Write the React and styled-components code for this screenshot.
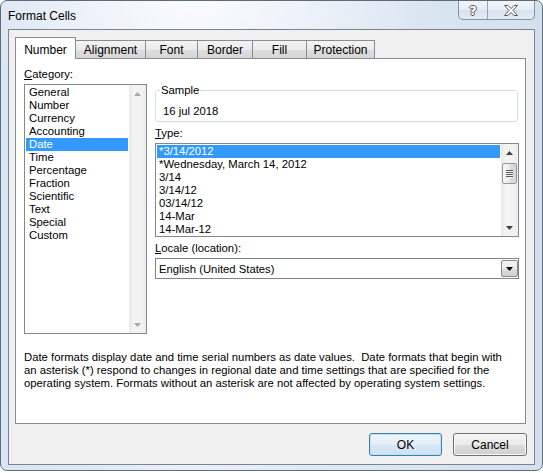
import React from "react";
import styled, { createGlobalStyle } from "styled-components";

const FONT = `"Liberation Sans", Arial, sans-serif`;

const GlobalStyle = createGlobalStyle`
  html, body { margin: 0; padding: 0; background: #ffffff; }
  body { font-family: ${FONT}; font-size: 11.3px; color: #000; }
  * { box-sizing: border-box; }
`;

const Window = styled.div`
  width: 543px;
  height: 471px;
  border: 1px solid #5d6b7a;
  border-radius: 7px;
  background:
    radial-gradient(ellipse 55% 30% at 35% 0%, rgba(255,255,255,0.75), rgba(255,255,255,0) 80%),
    linear-gradient(90deg, #d9e5f2 0%, #e9f0f8 35%, #dde7f3 70%, #d3e0ee 100%);
  display: flex;
  flex-direction: column;
  overflow: hidden;
`;

const TitleBar = styled.div`
  height: 28px;
  display: flex;
  align-items: flex-start;
  padding: 0 7px 0 7px;
`;

const Title = styled.div`
  margin-top: 8px;
  font-size: 12px;
  line-height: 14px;
`;

const CaptionGroup = styled.div`
  margin-left: auto;
  display: flex;
  height: 19px;
  border: 1px solid #8593a4;
  border-top: none;
  border-radius: 0 0 5px 5px;
  background: linear-gradient(#f2f6fb, #e4ecf5 50%, #d8e2ee 51%, #e2eaf4);
  overflow: hidden;
`;

const CaptionButton = styled.div`
  width: ${(p) => p.$w}px;
  display: flex;
  align-items: center;
  justify-content: center;
  & + & { border-left: 1px solid #95a2b2; }
`;

const HelpGlyph = styled.span`
  font-family: "DejaVu Sans", sans-serif;
  font-weight: bold;
  font-size: 13px;
  line-height: 13px;
  color: #ffffff;
  text-shadow: 1px 0 0 #5b5b5b, -1px 0 0 #5b5b5b, 0 1px 0 #5b5b5b, 0 -1px 0 #5b5b5b;
`;

const Client = styled.div`
  margin: 0 7px;
  height: 436px;
  border: 1px solid #7a8591;
  background: #f0f0f0;
  display: flex;
  flex-direction: column;
  padding: 7px 7px 0 6px;
`;

const TabStrip = styled.div`
  display: flex;
  align-items: flex-end;
  height: 21px;
`;

const Tab = styled.div`
  position: relative;
  width: ${(p) => p.$w}px;
  height: ${(p) => (p.$active ? 22 : 18)}px;
  margin-bottom: ${(p) => (p.$active ? -1 : 0)}px;
  margin-left: ${(p) => (p.$first ? 0 : -1)}px;
  z-index: ${(p) => (p.$active ? 2 : 1)};
  border: 1px solid #898c95;
  border-bottom: none;
  background: ${(p) =>
    p.$active ? "#ffffff" : "linear-gradient(#f3f3f3, #ebebeb 50%, #dedede 51%, #d6d6d6)"};
  display: flex;
  align-items: center;
  justify-content: center;
  padding-top: ${(p) => (p.$active ? 3 : 0)}px;
  font-size: 12px;
`;

const Panel = styled.div`
  width: 511px;
  height: 366px;
  border: 1px solid #898c95;
  background: #ffffff;
  padding: 9px 6px 0 8px;
  display: flex;
  flex-direction: column;
`;

const Columns = styled.div`
  display: flex;
  gap: 8px;
`;

const LeftCol = styled.div`
  width: 123px;
  display: flex;
  flex-direction: column;
`;

const RightCol = styled.div`
  width: 364px;
  display: flex;
  flex-direction: column;
  padding-top: 16px;
`;

const FieldLabel = styled.div`
  line-height: 13px;
  height: 13px;
  margin-top: ${(p) => p.$mt || 0}px;
  margin-bottom: ${(p) => p.$mb || 0}px;
`;

const Key = styled.span`
  text-decoration: underline;
  text-underline-offset: 1px;
`;

const ListBox = styled.div`
  height: ${(p) => p.$h}px;
  border: 1px solid #828790;
  background: #ffffff;
  display: flex;
`;

const ListItems = styled.div`
  flex: 1;
  padding: 1px;
  overflow: hidden;
`;

const ListItem = styled.div`
  height: 13px;
  line-height: 13px;
  padding-left: ${(p) => p.$pl}px;
  white-space: nowrap;
  background: ${(p) => (p.$selected ? "#3399ff" : "transparent")};
  color: ${(p) => (p.$selected ? "#ffffff" : "#000000")};
`;

const ScrollBar = styled.div`
  width: 17px;
  display: flex;
  flex-direction: column;
  align-items: stretch;
  background: linear-gradient(90deg, #e8e8e8 0%, #f3f3f3 25%, #f3f3f3 75%, #ececec 100%);
`;

const ScrollArrow = styled.div`
  height: 17px;
  display: flex;
  align-items: center;
  justify-content: center;
`;

const ScrollSpace = styled.div`
  flex: ${(p) => p.$flex || 1};
  height: ${(p) => (p.$h ? p.$h + "px" : "auto")};
`;

const Thumb = styled.div`
  height: 21px;
  margin: 0 1px;
  border: 1px solid #979797;
  border-radius: 2px;
  background: linear-gradient(90deg, #f6f6f6 0%, #ececec 50%, #dcdcdc 51%, #d6d6d6 100%);
  display: flex;
  flex-direction: column;
  align-items: center;
  justify-content: center;
  gap: 1px;
`;

const Grip = styled.div`
  width: 7px;
  height: 1px;
  background: #555b62;
  box-shadow: 0 1px 0 #f4f4f4;
`;

const SampleBox = styled.fieldset`
  margin: 0;
  padding: 8px 7px 3px 7px;
  min-width: 0;
  border: 1px solid #d5dfe5;
  border-radius: 3px;
  width: 363px;
`;

const Legend = styled.legend`
  padding: 0 1px;
  margin-left: -3px;
  line-height: 13px;
`;

const SampleText = styled.div`
  line-height: 13px;
`;

const Dropdown = styled.div`
  height: 21px;
  border: 1px solid #7f848c;
  background: #ffffff;
  display: flex;
  align-items: stretch;
`;

const DropdownText = styled.div`
  flex: 1;
  padding-left: 3px;
  display: flex;
  align-items: center;
`;

const DropdownButton = styled.div`
  width: 17px;
  margin: 1px 0;
  border: 1px solid #8a8a8a;
  border-radius: 2px;
  background: linear-gradient(#f4f4f4, #ebebeb 50%, #dddddd 51%, #cfcfcf);
  display: flex;
  align-items: center;
  justify-content: center;
`;

const Description = styled.div`
  margin-top: 17px;
  line-height: 13px;
  white-space: nowrap;
`;

const ButtonRow = styled.div`
  margin-top: 9px;
  display: flex;
  justify-content: flex-end;
  gap: 11px;
`;

const Button = styled.div`
  width: ${(p) => p.$w}px;
  height: 23px;
  border: 1px solid ${(p) => (p.$default ? "#3c7fb1" : "#707070")};
  border-radius: 3px;
  background: ${(p) =>
    p.$default
      ? "linear-gradient(#eef4fa, #e4eef8 50%, #d7e7f5 51%, #cfe2f3)"
      : "linear-gradient(#f2f2f2, #ebebeb 50%, #dddddd 51%, #cfcfcf)"};
  box-shadow: ${(p) => (p.$default ? "inset 0 0 0 1px #bfe0f5" : "inset 0 0 0 1px #f8f8f8")};
  display: flex;
  align-items: center;
  justify-content: center;
  font-size: 12px;
`;

const Arrow = ({ dir, color }) => (
  <svg width="7" height="4" viewBox="0 0 7 4">
    {dir === "up" ? (
      <polygon points="3.5,0 7,4 0,4" fill={color} />
    ) : (
      <polygon points="0,0 7,0 3.5,4" fill={color} />
    )}
  </svg>
);

const CloseGlyph = () => (
  <svg width="14" height="11" viewBox="0 0 14 11">
    <polygon
      points="0.5,0.5 4,0.5 7,3.6 10,0.5 13.5,0.5 9,5.5 13.5,10.5 10,10.5 7,7.4 4,10.5 0.5,10.5 5,5.5"
      fill="#ffffff"
      stroke="#5b5b5b"
      strokeWidth="1"
      strokeLinejoin="round"
    />
  </svg>
);

const categories = [
  "General", "Number", "Currency", "Accounting", "Date", "Time", "Percentage",
  "Fraction", "Scientific", "Text", "Special", "Custom",
];

const types = [
  "*3/14/2012", "*Wednesday, March 14, 2012", "3/14", "3/14/12", "03/14/12",
  "14-Mar", "14-Mar-12",
];

const tabs = [
  { label: "Number", w: 61 },
  { label: "Alignment", w: 71 },
  { label: "Font", w: 53 },
  { label: "Border", w: 56 },
  { label: "Fill", w: 55 },
  { label: "Protection", w: 69 },
];

export default function App() {
  return (
    <>
      <GlobalStyle />
      <Window>
        <TitleBar>
          <Title>Format Cells</Title>
          <CaptionGroup>
            <CaptionButton $w={28}>
              <HelpGlyph>?</HelpGlyph>
            </CaptionButton>
            <CaptionButton $w={47}>
              <CloseGlyph />
            </CaptionButton>
          </CaptionGroup>
        </TitleBar>
        <Client>
          <TabStrip>
            {tabs.map((t, i) => (
              <Tab key={t.label} $w={t.w} $first={i === 0} $active={i === 0}>
                {t.label}
              </Tab>
            ))}
          </TabStrip>
          <Panel>
            <Columns>
              <LeftCol>
                <FieldLabel $mb={3}>
                  <Key>C</Key>ategory:
                </FieldLabel>
                <ListBox $h={250}>
                  <ListItems>
                    {categories.map((c) => (
                      <ListItem key={c} $pl={3} $selected={c === "Date"}>
                        {c}
                      </ListItem>
                    ))}
                  </ListItems>
                  <ScrollBar>
                    <ScrollArrow>
                      <Arrow dir="up" color="#a8a8a8" />
                    </ScrollArrow>
                    <ScrollSpace />
                    <ScrollArrow>
                      <Arrow dir="down" color="#a8a8a8" />
                    </ScrollArrow>
                  </ScrollBar>
                </ListBox>
              </LeftCol>
              <RightCol>
                <SampleBox>
                  <Legend>Sample</Legend>
                  <SampleText>16 jul 2018</SampleText>
                </SampleBox>
                <FieldLabel $mt={5} $mb={3}>
                  <Key>T</Key>ype:
                </FieldLabel>
                <ListBox $h={94}>
                  <ListItems>
                    {types.map((t, i) => (
                      <ListItem key={t} $pl={2} $selected={i === 0}>
                        {t}
                      </ListItem>
                    ))}
                  </ListItems>
                  <ScrollBar>
                    <ScrollArrow>
                      <Arrow dir="up" color="#3f3f3f" />
                    </ScrollArrow>
                    <ScrollSpace $flex="none" $h={2} />
                    <Thumb>
                      <Grip />
                      <Grip />
                      <Grip />
                      <Grip />
                    </Thumb>
                    <ScrollSpace />
                    <ScrollArrow>
                      <Arrow dir="down" color="#3f3f3f" />
                    </ScrollArrow>
                  </ScrollBar>
                </ListBox>
                <FieldLabel $mt={5} $mb={3}>
                  <Key>L</Key>ocale (location):
                </FieldLabel>
                <Dropdown>
                  <DropdownText>English (United States)</DropdownText>
                  <DropdownButton>
                    <Arrow dir="down" color="#000000" />
                  </DropdownButton>
                </Dropdown>
              </RightCol>
            </Columns>
            <Description>
              Date formats display date and time serial numbers as date values.{"\u00a0 "}Date formats that begin with
              <br />
              an asterisk (*) respond to changes in regional date and time settings that are specified for the
              <br />
              operating system. Formats without an asterisk are not affected by operating system settings.
            </Description>
          </Panel>
          <ButtonRow>
            <Button $w={73} $default>OK</Button>
            <Button $w={74}>Cancel</Button>
          </ButtonRow>
        </Client>
      </Window>
    </>
  );
}
